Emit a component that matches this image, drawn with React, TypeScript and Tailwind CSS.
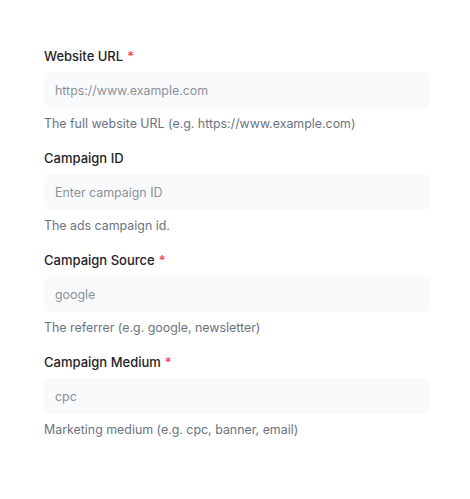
import React from 'react'

type Field = {
  label: string
  placeholder: string
  help: string
  required?: boolean
}

const fields: Field[] = [
  {
    label: 'Website URL',
    placeholder: 'https://www.example.com',
    help: 'The full website URL (e.g. https://www.example.com)',
    required: true
  },
  { label: 'Campaign ID', placeholder: 'Enter campaign ID', help: 'The ads campaign id.' },
  {
    label: 'Campaign Source',
    placeholder: 'google',
    help: 'The referrer (e.g. google, newsletter)',
    required: true
  },
  {
    label: 'Campaign Medium',
    placeholder: 'cpc',
    help: 'Marketing medium (e.g. cpc, banner, email)',
    required: true
  }
]

export default function App() {
  return (
    <div
      className="min-h-[499px] w-[470px] bg-white pl-[44px] pr-[40px] pt-[46px]"
      style={{ fontFamily: 'Inter, "Liberation Sans", sans-serif' }}
    >
      <div className="flex flex-col gap-[14px]">
        {fields.map((f) => (
          <div key={f.label} className="flex flex-col gap-[6px]">
            <label className="text-[13px] leading-5 font-medium text-[#1f2328]">
              {f.label}
              {f.required && <span className="ml-[4px] text-[#ef4444]">*</span>}
            </label>
            <input
              className="h-9 w-full rounded-md bg-[#f9fafb] px-[11px] text-[12.4px] text-[#111827] outline-none placeholder:text-[#8b9099]"
              placeholder={f.placeholder}
            />
            <p className="text-[12.4px] leading-5 text-[#6b7280]">{f.help}</p>
          </div>
        ))}
      </div>
    </div>
  )
}
